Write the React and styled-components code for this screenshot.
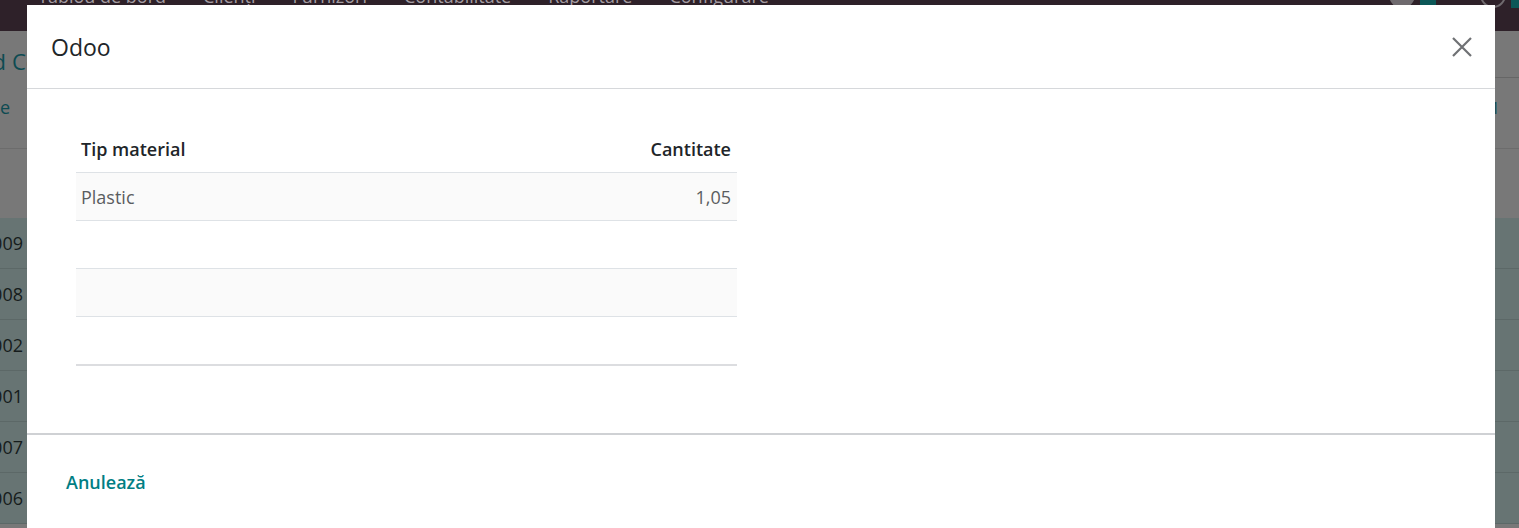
import React from 'react';
import styled, { createGlobalStyle } from 'styled-components';

const navItems = ['Tablou de bord', 'Clienți', 'Furnizori', 'Contabilitate', 'Raportare', 'Configurare'];
const listRows = ['S00009', 'S00008', 'S000002', 'S000001', 'S00007', 'S00006'];
const materials = [
	{ type: 'Plastic', qty: '1,05' },
	{ type: '', qty: '' },
	{ type: '', qty: '' },
	{ type: '', qty: '' },
];

const App = () => (
	<>
		<GlobalStyle />
		<Page>
			<NavBar>
				<NavMenu>
					{navItems.map((item) => (
						<NavItem key={item}>{item}</NavItem>
					))}
				</NavMenu>
				<NavRight>
					<Avatar />
					<Badge />
					<Spacer />
					<Avatar $outline />
					<Badge />
				</NavRight>
			</NavBar>
			<ControlPanel>
				<TopRow>
					<Breadcrumb>
						<Clipped $width={6}>Standard</Clipped>
						<span>Consumuri</span>
					</Breadcrumb>
					<SearchArea />
				</TopRow>
				<ActionsRow>
					<Clipped $width={10}>
						<LinkButton>Generare</LinkButton>
					</Clipped>
					<Pager>1-11 / 11</Pager>
				</ActionsRow>
			</ControlPanel>
			<ListHeader />
			{listRows.map((ref) => (
				<ListRow key={ref}>
					<Clipped $width={23}>
						<RowRef>{ref}</RowRef>
					</Clipped>
				</ListRow>
			))}
		</Page>

		<Modal>
			<ModalHeader>
				<Title>Odoo</Title>
				<CloseButton aria-label="Close">
					<svg width="22" height="22" viewBox="0 0 22 22">
						<path d="M2 2 L20 20 M20 2 L2 20" stroke="#6f7174" strokeWidth="2.2" fill="none" />
					</svg>
				</CloseButton>
			</ModalHeader>
			<ModalBody>
				<Table>
					<thead>
						<tr>
							<Th>Tip material</Th>
							<Th $right>Cantitate</Th>
						</tr>
					</thead>
					<tbody>
						{materials.map((m, i) => (
							<Tr key={i} $striped={i % 2 === 0} $last={i === materials.length - 1}>
								<Td>{m.type}</Td>
								<Td $right>{m.qty}</Td>
							</Tr>
						))}
					</tbody>
				</Table>
			</ModalBody>
			<ModalFooter>
				<CancelButton>Anulează</CancelButton>
			</ModalFooter>
		</Modal>
	</>
);

const GlobalStyle = createGlobalStyle`
	body {
		margin: 0;
		overflow: hidden;
		font-family: "Open Sans", "Noto Sans", sans-serif;
		background: #787878;
	}
`;

const Page = styled.div`
	width: 100%;
	height: 528px;
	overflow: hidden;
	background: #787878;
`;

const NavBar = styled.div`
	height: 31px;
	background: #2e2129;
	display: flex;
	justify-content: space-between;
	overflow: hidden;
`;

const NavMenu = styled.div`
	display: flex;
	gap: 37px;
	padding-left: 38px;
	margin-top: -14px;
`;

const NavItem = styled.span`
	font-size: 18px;
	line-height: 20px;
	color: #a39ca1;
	white-space: nowrap;
`;

const NavRight = styled.div`
	display: flex;
	align-items: flex-start;
	gap: 5px;
	margin-right: -8px;
	margin-top: -18px;
`;

const Avatar = styled.div`
	width: 26px;
	height: 26px;
	border-radius: 50%;
	background: ${(p) => (p.$outline ? 'transparent' : '#6f6a6e')};
	border: ${(p) => (p.$outline ? '2px solid #6f6a6e' : 'none')};
	box-sizing: border-box;
`;

const Badge = styled.div`
	width: 16px;
	height: 26px;
	background: #0c5757;
`;

const Spacer = styled.div`
	width: 34px;
`;

/* keeps the end of a text at a fixed x and lets the rest run off to the left */
const Clipped = styled.div`
	width: ${(p) => p.$width}px;
	flex-shrink: 0;
	display: flex;
	justify-content: flex-end;
	white-space: nowrap;
`;

const ControlPanel = styled.div`
	height: 117px;
	border-bottom: 1px solid #6c6c6c;
	display: flex;
	flex-direction: column;
`;

const TopRow = styled.div`
	height: 47px;
	display: flex;
	justify-content: space-between;
	align-items: flex-end;
`;

const Breadcrumb = styled.div`
	display: flex;
	gap: 6px;
	padding-bottom: 2px;
	font-size: 22px;
	color: #0d4b52;
`;

const SearchArea = styled.div`
	width: 50%;
	align-self: stretch;
	border-bottom: 1px solid #666;
`;

const ActionsRow = styled.div`
	flex: 1;
	display: flex;
	justify-content: space-between;
	align-items: center;
	padding-bottom: 12px;
`;

const LinkButton = styled.span`
	font-size: 18px;
	color: #0d4b52;
`;

const Pager = styled.span`
	margin-right: 19px;
	font-size: 17px;
	color: #0d4b52;
`;

const ListHeader = styled.div`
	height: 69px;
`;

const ListRow = styled.div`
	height: 50px;
	border-bottom: 1px solid #5c6867;
	background: #677473;
	display: flex;
	align-items: center;
`;

const RowRef = styled.span`
	font-size: 18px;
	color: #161c1c;
`;

const Modal = styled.div`
	position: absolute;
	top: 5px;
	left: 27px;
	width: 1468px;
	height: 540px;
	background: #fff;
	display: flex;
	flex-direction: column;
`;

const ModalHeader = styled.div`
	height: 83px;
	border-bottom: 1px solid #d6d8db;
	display: flex;
	align-items: center;
	justify-content: space-between;
	padding: 0 22px 0 24px;
`;

const Title = styled.h4`
	margin: 0;
	font-size: 23px;
	font-weight: 500;
	color: #212529;
`;

const CloseButton = styled.button`
	border: none;
	background: none;
	padding: 0;
	display: flex;
	cursor: pointer;
`;

const ModalBody = styled.div`
	height: 346px;
	padding: 36px 0 0 49px;
	box-sizing: border-box;
	border-bottom: 2px solid #cfd1d4;
`;

const Table = styled.table`
	width: 661px;
	border-collapse: collapse;
	font-size: 18px;
`;

const Th = styled.th`
	height: 47px;
	padding: 0 6px 0 5px;
	text-align: ${(p) => (p.$right ? 'right' : 'left')};
	font-weight: 600;
	color: #212529;
	border-bottom: 1px solid #dee2e6;
`;

const Tr = styled.tr`
	height: 48px;
	background: ${(p) => (p.$striped ? '#fafafa' : '#fff')};
	border-bottom: ${(p) => (p.$last ? '2px solid #dcdde0' : '1px solid #dee2e6')};
`;

const Td = styled.td`
	padding: 0 6px 0 5px;
	text-align: ${(p) => (p.$right ? 'right' : 'left')};
	color: #5a5d60;
`;

const ModalFooter = styled.div`
	flex: 1;
	padding: 35px 0 0 39px;
`;

const CancelButton = styled.button`
	border: none;
	background: none;
	padding: 0;
	font-family: inherit;
	font-size: 18px;
	font-weight: 600;
	color: #017e84;
	cursor: pointer;
`;

export default App;
